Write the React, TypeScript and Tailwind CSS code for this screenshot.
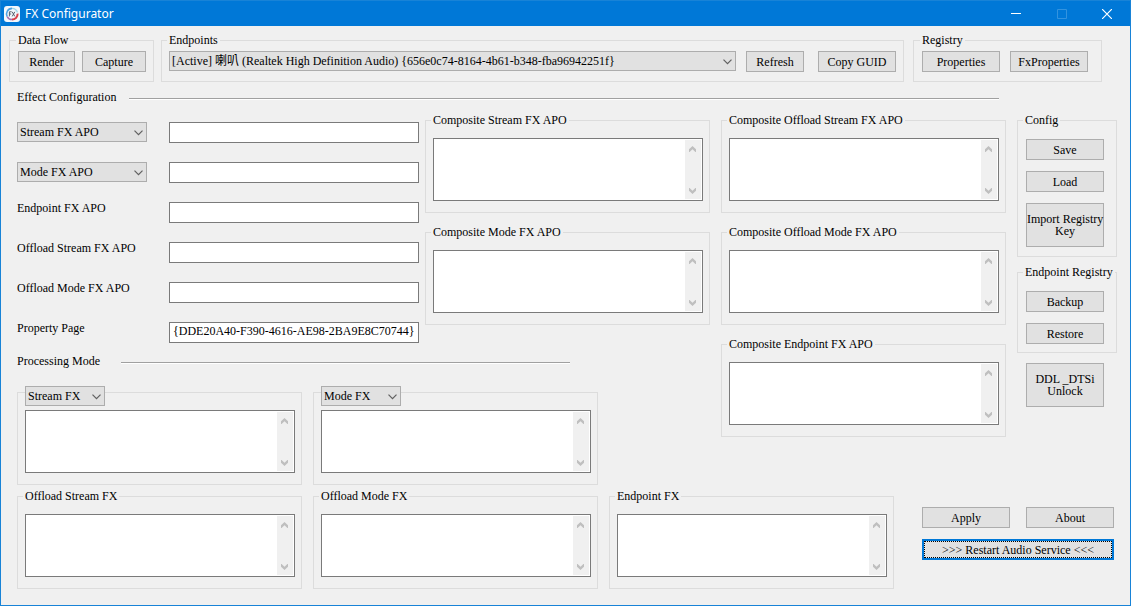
import React, { useState } from 'react';
import clsx from 'clsx';

const endpoints = ['[Active] 喇叭 (Realtek High Definition Audio) {656e0c74-8164-4b61-b348-fba96942251f}'];

const AppIcon: React.FC = () => (
  <svg width="16" height="16" viewBox="0 0 16 16" aria-hidden="true">
    <rect width="16" height="16" rx="3" fill="#f4f8fc" />
    <path d="M3.2 10.6A5.6 5.6 0 0 1 8 2.4" fill="none" stroke="#4fa3e3" strokeWidth="1.6" />
    <path d="M8 2.4a5.6 5.6 0 0 1 5.4 4" fill="none" stroke="#9ed8ea" strokeWidth="1.4" />
    <path d="M13.6 7.6A5.6 5.6 0 0 1 8 13.6" fill="none" stroke="#d8404a" strokeWidth="2" />
    <path d="M8 13.6a5.6 5.6 0 0 1-4.8-3" fill="none" stroke="#a86fb0" strokeWidth="1.5" />
    <path d="M5.4 10.4V5.8h2.2M5.4 8h1.8M8.2 5.8l2.6 4.6M10.8 5.8l-2.6 4.6" fill="none" stroke="#55606e" strokeWidth="1" />
  </svg>
);

const TitleBar: React.FC = () => (
  <header className="flex h-[25px] items-center bg-[#0078d7] pl-[3px] text-white">
    <AppIcon />
    <h1 className="ml-[5px] flex-1 font-['Noto_Sans',sans-serif] text-[12px] leading-4">FX Configurator</h1>
    <button aria-label="Minimize" className="flex h-full w-[46px] items-center justify-center">
      <svg width="10" height="10" viewBox="0 0 10 10">
        <path d="M0 4.5h10" stroke="white" />
      </svg>
    </button>
    <button aria-label="Maximize" disabled className="flex h-full w-[45px] items-center justify-center">
      <svg width="10" height="10" viewBox="0 0 10 10">
        <path d="M.5.5h9v9h-9z" fill="none" stroke="#3393df" />
      </svg>
    </button>
    <button aria-label="Close" className="flex h-full w-[46px] items-center justify-center">
      <svg width="10" height="10" viewBox="0 0 10 10">
        <path d="M0 0l10 10M10 0L0 10" stroke="white" strokeWidth="1.2" />
      </svg>
    </button>
  </header>
);

interface ButtonProps {
  className?: string;
  children: React.ReactNode;
}

const Button: React.FC<ButtonProps> = ({ className, children }) => (
  <button
    className={clsx(
      'shrink-0 border border-[#adadad] bg-[#e1e1e1] leading-3 hover:border-[#0078d7] hover:bg-[#e5f1fb]',
      className
    )}
  >
    {children}
  </button>
);

interface DropDownProps {
  label: string;
  options: string[];
  className?: string;
}

const DropDown: React.FC<DropDownProps> = ({ label, options, className }) => (
  <div className={clsx('relative h-5', className)}>
    <select
      aria-label={label}
      className="block h-full w-full appearance-none border border-[#adadad] bg-[#e1e1e1] pl-[2px] pr-4 leading-4"
    >
      {options.map(option => (
        <option key={option}>{option}</option>
      ))}
    </select>
    <svg
      width="9"
      height="6"
      viewBox="0 0 9 6"
      className="pointer-events-none absolute right-1 top-2"
      aria-hidden="true"
    >
      <path d="M.5.7l4 4 4-4" fill="none" stroke="#606060" strokeWidth="1.2" />
    </svg>
  </div>
);

interface GroupProps {
  title: string;
  className?: string;
  children: React.ReactNode;
}

const Group: React.FC<GroupProps> = ({ title, className, children }) => (
  <fieldset className={clsx('min-w-0 border border-[#dcdcdc]', className)}>
    <legend className="-ml-[2px] whitespace-nowrap px-[2px] leading-[13px]">{title}</legend>
    {children}
  </fieldset>
);

// Multi-line box with a permanently visible, disabled scroll bar
const ListBox: React.FC<{ label: string }> = ({ label }) => {
  const [value, setValue] = useState('');

  return (
    <div className="flex h-[63px] border border-[#7a7a7a] bg-white p-[1px]">
      <textarea
        aria-label={label}
        value={value}
        onChange={e => setValue(e.target.value)}
        className="min-w-0 flex-1 resize-none overflow-hidden px-1 outline-none"
      />
      <div className="flex w-4 flex-col justify-between bg-[#f0f0f0] pb-[5px] pl-1 pt-[6px]" aria-hidden="true">
        <svg width="7" height="6" viewBox="0 0 7 6">
          <path d="M0 3.2L3.5 0 7 3.2V6H6.4L3.5 3.2.6 6H0z" fill="#bfbfbf" />
        </svg>
        <svg width="7" height="6" viewBox="0 0 7 6">
          <path d="M0 2.8L3.5 6 7 2.8V0H6.4L3.5 2.8.6 0H0z" fill="#bfbfbf" />
        </svg>
      </div>
    </div>
  );
};

const ListGroup: React.FC<{ title: string }> = ({ title }) => (
  <Group title={title} className="pb-[11px] pl-[7px] pr-[6px] pt-[11px]">
    <ListBox label={title} />
  </Group>
);

// The drop-down takes the place of the group's caption
const ModeGroup: React.FC<{ name: string; options: string[] }> = ({ name, options }) => (
  <div role="group" aria-label={name} className="min-w-0 border border-[#dcdcdc] pb-[11px] pl-[7px] pr-[6px]">
    <DropDown label={`${name} type`} options={options} className="-mt-[7px] mb-1 w-20" />
    <ListBox label={name} />
  </div>
);

const SectionTitle: React.FC<{ title: string; className?: string; titleClass: string }> = ({
  title,
  className,
  titleClass,
}) => (
  <div className={clsx('flex items-start', className)}>
    <h2 className={clsx('shrink-0 leading-[13px]', titleClass)}>{title}</h2>
    <div className="mt-[7px] h-[2px] flex-1 border-b border-t border-b-white border-t-[#a0a0a0]" />
  </div>
);

const fields = [
  { id: 'stream', label: 'Stream FX APO', select: true },
  { id: 'mode', label: 'Mode FX APO', select: true },
  { id: 'endpoint', label: 'Endpoint FX APO' },
  { id: 'offload-stream', label: 'Offload Stream FX APO' },
  { id: 'offload-mode', label: 'Offload Mode FX APO' },
  { id: 'property-page', label: 'Property Page', value: '{DDE20A40-F390-4616-AE98-2BA9E8C70744}' },
];

const EffectForm: React.FC = () => (
  <div className="flex flex-col gap-[19px] pt-2">
    {fields.map(field => (
      <div key={field.id} className="flex items-start">
        <div className="w-[152px] shrink-0">
          {field.select ? (
            <DropDown label={`${field.label} type`} options={[field.label]} className="w-[130px]" />
          ) : (
            <label htmlFor={field.id} className="block leading-[13px]">
              {field.label}
            </label>
          )}
        </div>
        <input
          id={field.id}
          type="text"
          aria-label={field.label}
          defaultValue={field.value}
          className="h-[21px] min-w-0 flex-1 border border-[#7a7a7a] bg-white px-[3px] pb-[2px] leading-4 outline-none"
        />
      </div>
    ))}
  </div>
);

const App: React.FC = () => {
  return (
    <div className="flex min-h-screen flex-col border border-[#1883d7] bg-[#f0f0f0] font-['Liberation_Serif','Noto_Sans_CJK_TC',serif] text-[12px] text-black">
      <TitleBar />

      <main className="flex-1 pb-4 pl-4 pr-[13px]">
        {/* Top groups */}
        <div className="-ml-2 mr-[15px] flex pt-2">
          <Group title="Data Flow" className="mr-[7px] pb-[9px] pl-2 pr-[7px] pt-1">
            <div className="flex gap-[7px]">
              <Button className="h-[21px] w-[57px]">Render</Button>
              <Button className="h-[21px] w-16">Capture</Button>
            </div>
          </Group>
          <Group title="Endpoints" className="mr-[9px] flex-1 pb-[9px] pl-[7px] pr-[7px] pt-1">
            <div className="flex">
              <DropDown label="Endpoint" options={endpoints} className="mr-[10px] min-w-0 flex-1" />
              <Button className="mr-[14px] h-[21px] w-[58px]">Refresh</Button>
              <Button className="h-[21px] w-[78px]">Copy GUID</Button>
            </div>
          </Group>
          <Group title="Registry" className="pb-[9px] pl-2 pr-[13px] pt-1">
            <div className="flex gap-[10px]">
              <Button className="h-[21px] w-[78px]">Properties</Button>
              <Button className="h-[21px] w-[78px]">FxProperties</Button>
            </div>
          </Group>
        </div>

        <SectionTitle title="Effect Configuration" className="mr-[118px] mt-[9px]" titleClass="w-28" />

        <div className="mt-[10px] grid grid-cols-[693fr_285fr_100px] gap-[11px]">
          <div className="min-w-0">
            <div className="grid grid-cols-[402fr_285fr] gap-[6px]">
              <EffectForm />
              <div className="flex flex-col gap-[13px]">
                <ListGroup title="Composite Stream FX APO" />
                <ListGroup title="Composite Mode FX APO" />
              </div>
            </div>

            <SectionTitle title="Processing Mode" className="mr-[140px] mt-3" titleClass="w-[104px]" />
            <div className="mt-6 grid grid-cols-[285fr_285fr_101fr] gap-[11px]">
              <ModeGroup name="Stream FX" options={['Stream FX']} />
              <ModeGroup name="Mode FX" options={['Mode FX']} />
            </div>
          </div>

          <div className="flex min-w-0 flex-col gap-[13px]">
            <ListGroup title="Composite Offload Stream FX APO" />
            <ListGroup title="Composite Offload Mode FX APO" />
            <ListGroup title="Composite Endpoint FX APO" />
          </div>

          <div className="flex flex-col">
            <Group title="Config" className="pb-[9px] pl-[7px] pr-3 pt-3">
              <div className="flex flex-col gap-[11px] pl-[1px]">
                <Button className="h-[21px]">Save</Button>
                <Button className="h-[21px]">Load</Button>
                <Button className="h-11 whitespace-nowrap">
                  Import Registry
                  <br />
                  Key
                </Button>
              </div>
            </Group>
            <Group title="Endpoint Registry" className="mt-[9px] pb-2 pl-[7px] pr-3 pt-3">
              <div className="flex flex-col gap-[11px] pl-[1px]">
                <Button className="h-[21px]">Backup</Button>
                <Button className="h-[21px]">Restore</Button>
              </div>
            </Group>
            <Button className="ml-[9px] mr-[13px] mt-[10px] h-11">
              DDL _DTSi
              <br />
              Unlock
            </Button>
          </div>
        </div>

        {/* Bottom row */}
        <div className="mr-[3px] mt-[5px] flex gap-7">
          <div className="grid min-w-0 flex-1 grid-cols-3 gap-[11px]">
            <ListGroup title="Offload Stream FX" />
            <ListGroup title="Offload Mode FX" />
            <ListGroup title="Endpoint FX" />
          </div>
          <div className="flex w-48 flex-col gap-[11px] pt-[17px]">
            <div className="grid grid-cols-2 gap-4">
              <Button className="h-[21px]">Apply</Button>
              <Button className="h-[21px]">About</Button>
            </div>
            <button className="h-[21px] border-2 border-[#0078d7] bg-[#e1e1e1]">
              <span className="flex h-full items-center justify-center border border-dotted border-black leading-3">
                &gt;&gt;&gt; Restart Audio Service &lt;&lt;&lt;
              </span>
            </button>
          </div>
        </div>
      </main>
    </div>
  );
};

export default App;
